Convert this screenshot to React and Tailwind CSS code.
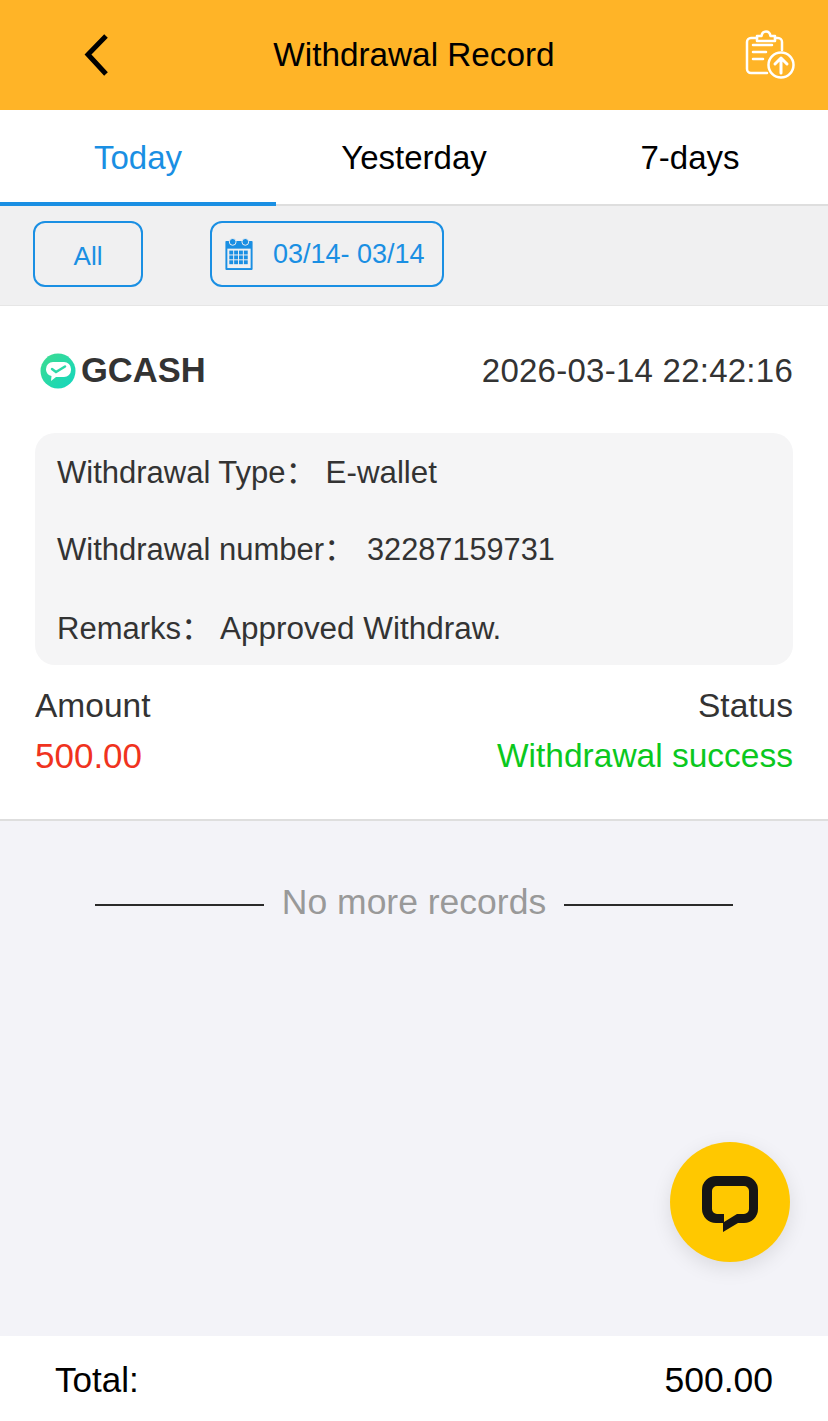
function BackIcon() {
  return (
    <svg width="30" height="44" viewBox="0 0 30 44" fill="none" stroke="#000" strokeWidth="5">
      <path d="M24 3 L6 21.500 L24 41" />
    </svg>
  );
}

function UploadClipboardIcon() {
  return (
    <svg width="50" height="50" viewBox="0 0 50 50" fill="none" stroke="#fff" strokeWidth="2.500" strokeLinecap="round" strokeLinejoin="round">
      <path d="M22 43H6a4 4 0 0 1-4-4V12a4 4 0 0 1 4-4h6" />
      <path d="M12 6h4.500c1-6 8-6 9 0H30v5H12z" />
      <path d="M30 8h3a4 4 0 0 1 4 4v8" />
      <path d="M8 15h19M8 22h13M8 29h10" />
      <circle cx="36" cy="35" r="12.500" />
      <path d="M36 43V28M30 34l6-6 6 6" strokeWidth="3" />
    </svg>
  );
}

function CalendarIcon() {
  return (
    <svg width="30" height="33" viewBox="0 0 30 34" className="-mt-[1px]">
      <path d="M2 4h26a1 1 0 0 1 1 1v28a1 1 0 0 1-1 1H2a1 1 0 0 1-1-1V5a1 1 0 0 1 1-1z" fill="#1a8fe3" />
      <rect x="3" y="12" width="24" height="20" fill="#f0f0f1" />
      <circle cx="8.500" cy="5" r="3.500" fill="#1a8fe3" stroke="#f0f0f1" strokeWidth="1" />
      <circle cx="21.500" cy="5" r="3.500" fill="#1a8fe3" stroke="#f0f0f1" strokeWidth="1" />
      {[14, 19, 24].map((y) =>
        [5, 10, 15, 20].map((x) => <rect key={`${x}-${y}`} x={x} y={y} width="4" height="4" fill="#1a8fe3" />)
      )}
    </svg>
  );
}

function GcashLogo() {
  return (
    <svg width="36" height="36" viewBox="0 0 36 36">
      <defs>
        <linearGradient id="gc" x1="0" y1="0" x2="1" y2="1">
          <stop offset="0" stopColor="#3fdc8f" />
          <stop offset="1" stopColor="#12d6c0" />
        </linearGradient>
      </defs>
      <circle cx="18" cy="18" r="17.500" fill="url(#gc)" />
      <path d="M13 9h11a7 7 0 0 1 7 7v1a7 7 0 0 1-7 7h-8l-5 4 .5-5A7 7 0 0 1 6 17v-1a7 7 0 0 1 7-7z" fill="#fff" />
      <path d="M12 16l4 3 9-5.500" fill="none" stroke="#2cd9a8" strokeWidth="2.500" strokeLinecap="round" />
    </svg>
  );
}

function ChatIcon() {
  return (
    <svg width="56" height="56" viewBox="0 0 56 56">
      <path
        d="M14 0H42a14 14 0 0 1 14 14V33a14 14 0 0 1-14 14H36L21 56V47H14A14 14 0 0 1 0 33V14A14 14 0 0 1 14 0zM15 10a5 5 0 0 0-5 5V33a5 5 0 0 0 5 5H22V46L35 38H42a5 5 0 0 0 5-5V15a5 5 0 0 0-5-5z"
        fill="#151515"
        fillRule="evenodd"
      />
    </svg>
  );
}

const tabs = ["Today", "Yesterday", "7-days"];

const details = [
  { label: "Withdrawal Type：", value: "E-wallet", valueClass: "ml-[9px] text-[31.300px]" },
  { label: "Withdrawal number：", value: "32287159731", valueClass: "ml-[12px] text-[30.700px]" },
  { label: "Remarks：", value: "Approved Withdraw.", valueClass: "ml-[8px] text-[31.450px]" },
];

export default function App() {
  return (
    <div className="relative flex h-[1421px] w-[828px] flex-col overflow-hidden bg-[#f3f3f8] font-['Liberation_Sans','Noto_Sans_CJK_SC',sans-serif] text-[#333]">
      <header className="grid h-[110px] shrink-0 grid-cols-[1fr_auto_1fr] items-center bg-[#ffb427] px-[33px]">
        <div className="pl-[49px]">
          <BackIcon />
        </div>
        <h1 className="text-[33.300px] text-black">Withdrawal Record</h1>
        <div className="flex justify-end">
          <UploadClipboardIcon />
        </div>
      </header>

      <nav className="flex h-[96px] shrink-0 border-b-2 border-[#dedede] bg-white">
        {tabs.map((tab, i) => (
          <div
            key={tab}
            className={`-mb-[2px] flex w-[276px] items-center justify-center text-[33px] ${
              i === 0 ? "border-b-4 border-[#1a8fe3] pt-[3px] text-[#1a8fe3]" : "pb-[1px] text-black"
            }`}
          >
            {tab}
          </div>
        ))}
      </nav>

      <div className="flex h-[100px] shrink-0 items-center gap-[67px] border-b border-[#e6e6e6] bg-[#f0f0f1] pb-[3px] pl-[33px] text-[27px] text-[#1a8fe3]">
        <div className="flex h-[66px] w-[110px] items-center justify-center rounded-xl border-2 border-[#1a8fe3] pt-[5px] text-[26px]">All</div>
        <div className="flex h-[66px] w-[234px] items-center gap-[19px] rounded-xl border-2 border-[#1a8fe3] pl-[12px]">
          <CalendarIcon />
          <span>03/14- 03/14</span>
        </div>
      </div>

      <section className="shrink-0 border-b-2 border-[#dedede] bg-white px-[35px]">
        <div className="flex h-[127px] items-center justify-between pt-[3px]">
          <div className="flex items-center gap-[5px] pl-[5px]">
            <GcashLogo />
            <span className="text-[34.500px] font-bold text-[#333]">GCASH</span>
          </div>
          <span className="text-[33px] tracking-[0.25px]">2026-03-14 22:42:16</span>
        </div>
        <div className="flex h-[232px] flex-col justify-between rounded-[20px] bg-[#f5f5f6] px-[22px] pb-[13px] pt-[17px] text-[31px]">
          {details.map((row) => (
            <div key={row.label} className="flex items-baseline">
              <span>{row.label}</span>
              <span className={row.valueClass}>{row.value}</span>
            </div>
          ))}
        </div>
        <div className="flex justify-between pb-[39px] pt-[17px] leading-[49px]">
          <div>
            <div className="-mt-[1px] mb-[1px] text-[33.500px]">Amount</div>
            <div className="text-[35px] text-[#f0331e]">500.00</div>
          </div>
          <div className="text-right">
            <div className="-mt-[1px] mb-[1px] text-[33.500px]">Status</div>
            <div className="text-[33.500px] text-[#0bc81e]">Withdrawal success</div>
          </div>
        </div>
      </section>

      <div className="flex shrink-0 items-center justify-center gap-[18px] pt-[55px] text-[35.500px] text-[#999]">
        <span className="mt-[4px] h-[2px] w-[169px] bg-[#2a2a2a]" />
        <span>No more records</span>
        <span className="mt-[4px] h-[2px] w-[169px] bg-[#2a2a2a]" />
      </div>

      <footer className="mt-auto flex h-[85px] shrink-0 items-center justify-between bg-white px-[55px] pt-[3px] text-[35px] leading-[52px] text-black">
        <span>Total:</span>
        <span className="text-[35.500px]">500.00</span>
      </footer>

      <button
        type="button"
        className="absolute left-[670px] top-[1142px] flex h-[120px] w-[120px] items-center justify-center rounded-full bg-[#ffc800] pt-[4px] shadow-[0_6px_20px_rgba(0,0,0,0.1)]"
      >
        <ChatIcon />
      </button>
    </div>
  );
}
